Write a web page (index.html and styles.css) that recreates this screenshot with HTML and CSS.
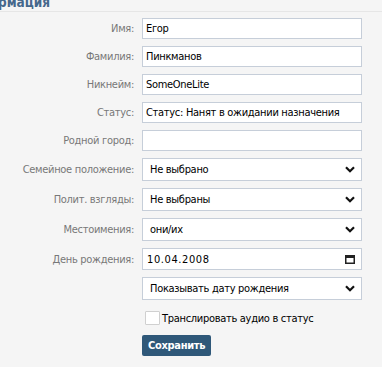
FILE: index.html
```html
<!DOCTYPE html>
<html lang="ru">
<head>
<meta charset="utf-8">
<link rel="stylesheet" href="styles.css">
</head>
<body>
<div class="head"><span class="title">Информация</span></div>
<div class="form">
  <label class="lbl">Имя:</label>
  <input class="inp" type="text" value="Егор">
  <label class="lbl">Фамилия:</label>
  <input class="inp" type="text" value="Пинкманов">
  <label class="lbl">Никнейм:</label>
  <input class="inp" type="text" value="SomeOneLite">
  <label class="lbl">Статус:</label>
  <input class="inp" type="text" value="Статус: Нанят в ожидании назначения">
  <label class="lbl">Родной город:</label>
  <input class="inp" type="text" value="">
  <label class="lbl">Семейное положение:</label>
  <div class="sel"><span>Не выбрано</span><svg class="chev" width="10" height="7" viewBox="0 0 10 7"><path d="M1 1.2 L5 5.2 L9 1.2" fill="none" stroke="#111" stroke-width="2.2"/></svg></div>
  <label class="lbl">Полит. взгляды:</label>
  <div class="sel"><span>Не выбраны</span><svg class="chev" width="10" height="7" viewBox="0 0 10 7"><path d="M1 1.2 L5 5.2 L9 1.2" fill="none" stroke="#111" stroke-width="2.2"/></svg></div>
  <label class="lbl">Местоимения:</label>
  <div class="sel"><span>они/их</span><svg class="chev" width="10" height="7" viewBox="0 0 10 7"><path d="M1 1.2 L5 5.2 L9 1.2" fill="none" stroke="#111" stroke-width="2.2"/></svg></div>
  <label class="lbl">День рождения:</label>
  <div class="date"><span class="dval">10.04.2008</span><svg class="cal" width="10" height="9" viewBox="0 0 10 9"><rect x="0.75" y="0.75" width="8.5" height="7.5" fill="none" stroke="#222" stroke-width="1.5"/><rect x="0.5" y="0.5" width="9" height="2.5" fill="#222"/></svg></div>
  <span></span>
  <div class="sel"><span>Показывать дату рождения</span><svg class="chev" width="10" height="7" viewBox="0 0 10 7"><path d="M1 1.2 L5 5.2 L9 1.2" fill="none" stroke="#111" stroke-width="2.2"/></svg></div>
  <span></span>
  <label class="check"><span class="box"></span><span>Транслировать аудио в статус</span></label>
  <span></span>
  <div><button class="btn" type="button">Сохранить</button></div>
</div>
</body>
</html>
```

FILE: styles.css
```css
html, body {
  margin: 0;
  padding: 0;
  background: #f5f5f5;
  overflow: hidden;
}
body {
  font-family: "DejaVu Sans Condensed", "DejaVu Sans", sans-serif;
  font-size: 11px;
  letter-spacing: -0.3px;
  color: #000;
}
.head {
  height: 17px;
  margin-top: -6px;
  margin-left: -41px;
  line-height: 17px;
  border-bottom: 1px solid #e6e6e6;
}
.title {
  font-size: 13.5px;
  font-weight: bold;
  letter-spacing: 0;
  color: #46688c;
}
.form {
  display: grid;
  grid-template-columns: 134px 220px;
  column-gap: 8px;
  row-gap: 7px;
  padding-top: 6px;
  align-items: center;
}
.lbl {
  text-align: right;
  color: #787878;
  white-space: nowrap;
}
.inp {
  box-sizing: border-box;
  width: 220px;
  height: 21px;
  margin: 0;
  padding: 0 3px;
  border: 1px solid #c6ced9;
  background: #fff;
  font: inherit;
  letter-spacing: -0.3px;
  color: #000;
  outline: none;
}
.sel, .date {
  box-sizing: border-box;
  height: 23px;
  border: 1px solid #c6ced9;
  background: #fff;
  display: flex;
  align-items: center;
  justify-content: space-between;
  padding: 0 6px 0 7px;
}
.date {
  height: 22px;
  padding: 0 6px 0 4px;
}
.dval {
  letter-spacing: 0.6px;
}
.chev {
  display: block;
}
.cal {
  display: block;
}
.check {
  display: flex;
  align-items: center;
  gap: 2px;
  margin-top: 4px;
  margin-left: 3px;
}
.box {
  box-sizing: border-box;
  width: 15px;
  height: 14px;
  border: 1px solid #d0d0d0;
  background: #fff;
  border-radius: 1px;
}
.btn {
  display: block;
  height: 21px;
  padding: 0 6px;
  margin-top: 3px;
  border: 0;
  border-radius: 2px;
  background: #2f5879;
  color: #fff;
  font: bold 11px "DejaVu Sans Condensed", "DejaVu Sans", sans-serif;
  letter-spacing: -0.3px;
}
```
